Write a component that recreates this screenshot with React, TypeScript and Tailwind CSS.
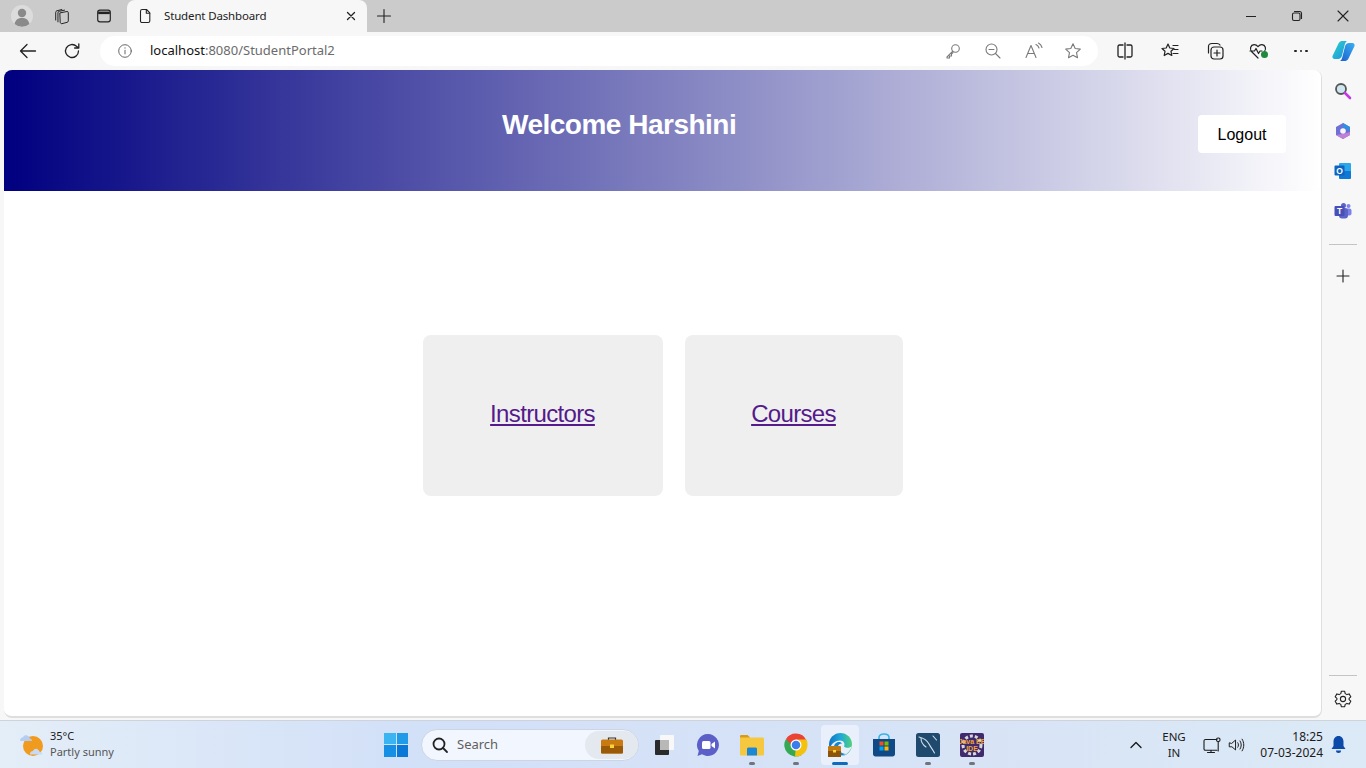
import type { ReactNode } from 'react';

const font = "font-['Liberation_Sans',Arial,sans-serif]";
const uiFont = "font-['Noto_Sans','Open_Sans',sans-serif]";

function Line({ children, size = 20, view = 20, className = '' }: { children: ReactNode; size?: number; view?: number; className?: string }) {
    return (
        <svg width={size} height={size} viewBox={`0 0 ${view} ${view}`} fill="none" stroke="currentColor" strokeWidth={1.1} strokeLinecap="round" strokeLinejoin="round" className={className}>
            {children}
        </svg>
    );
}

function TabStrip() {
    return (
        <div className="flex h-8 items-end bg-[#cbcbcb] text-[#222]">
            <div className="flex h-8 w-[44px] items-center justify-center">
                <svg width="22" height="22" viewBox="0 0 22 22">
                    <circle cx="11" cy="11" r="11" fill="#dcdcdc" />
                    <circle cx="11" cy="8" r="4.2" fill="#8a8a8a" />
                    <path d="M3.6 19c.8-4.4 3.6-6 7.4-6s6.600 1.600 7.400 6a11 11 0 0 1-14.800 0z" fill="#8a8a8a" />
                </svg>
            </div>
            <div className="flex h-8 w-[36px] items-center justify-center">
                <Line size={18}>
                    <path d="M8 6.500l7.500-1.500c.8-.1 1.500.4 1.500 1.200v9.300c0 .8-.5 1.300-1.200 1.500L10 18.500c-1 .2-2-.5-2-1.500z" />
                    <path d="M5.500 16.500V6.500c0-1 .5-1.500 1.300-1.700l6-1.300M3 14.500V6c0-1 .5-1.600 1.300-1.800l5.500-1.400" />
                </Line>
            </div>
            <div className="flex h-8 w-[47px] items-center justify-center">
                <Line size={18}>
                    <rect x="3" y="3.500" width="14" height="13" rx="2.500" strokeWidth={1.300} />
                    <path d="M3.500 6.500h13" strokeWidth={2.800} strokeLinecap="butt" />
                </Line>
            </div>
            <div className={`flex h-8 w-[240px] items-center rounded-t-[8px] bg-[#f7f7f7] pl-[10px] pr-[8px] ${uiFont}`}>
                <Line size={16} view={16}>
                    <path d="M3.500 3.200c0-1 .7-1.700 1.700-1.700h4.300l3.300 3.400v8c0 1-.7 1.600-1.600 1.600H5.200c-1 0-1.700-.6-1.700-1.600z" />
                    <path d="M9.300 1.700v3.500h3.400" />
                </Line>
                <span className="ml-[11px] flex-1 text-[11.500px] tracking-[-0.15px] text-[#222]">Student Dashboard</span>
                <Line size={16} view={16}>
                    <path d="M4.500 4.500l7 7M11.500 4.500l-7 7" strokeWidth={1.300} />
                </Line>
            </div>
            <div className="flex h-8 w-[34px] items-center justify-center">
                <Line size={20}>
                    <path d="M10 3.500v13M3.500 10h13" />
                </Line>
            </div>
            <div className="flex-1" />
            <div className="flex h-8 w-[46px] items-center justify-center">
                <div className="h-px w-[10px] bg-[#222]" />
            </div>
            <div className="flex h-8 w-[46px] items-center justify-center">
                <Line size={12} view={12}>
                    <rect x="1.500" y="3" width="7.500" height="7.500" rx="1.500" />
                    <path d="M3.500 1.500h5c1.200 0 2 .8 2 2v5" />
                </Line>
            </div>
            <div className="flex h-8 w-[46px] items-center justify-center">
                <Line size={14} view={14}>
                    <path d="M2 2l10 10M12 2L2 12" />
                </Line>
            </div>
        </div>
    );
}

function AddressBar() {
    return (
        <div className="ml-[12px] flex h-[30px] flex-1 items-center rounded-full bg-white">
            <div className="flex w-[50px] items-center justify-center text-[#666]">
                <Line size={18}>
                    <circle cx="10" cy="10" r="7" />
                    <path d="M10 9.200v4M10 6.400v.5" />
                </Line>
            </div>
            <span className={`flex-1 text-[13px] text-[#6b6b6b] ${uiFont}`}>
                <span className="text-[#111]">localhost</span>:8080/StudentPortal2
            </span>
            <div className="flex items-center gap-[20px] pr-[15px] text-[#7a7a7a]">
                <Line>
                    <circle cx="12.500" cy="7.500" r="3.800" />
                    <path d="M9.800 10.200L4 16v1h2.500v-2h2v-2l1.500-1.300" />
                </Line>
                <Line>
                    <circle cx="8.500" cy="8.500" r="5.500" />
                    <path d="M6 8.500h5M12.500 12.500L17 17" />
                </Line>
                <Line>
                    <path d="M3 16.500L8 4.500l5 12M4.800 12.500h6.400M13 3.500c1.500.8 2.500 2 3 3.500M15.500 2c2 1.100 3 2.700 3.500 4.500" />
                </Line>
                <Line>
                    <path d="M10 2.800l2.200 4.700 5.100.6-3.800 3.500 1 5.100L10 14.200l-4.500 2.500 1-5.100-3.800-3.500 5.100-.6z" />
                </Line>
            </div>
        </div>
    );
}

function Toolbar() {
    return (
        <div className="flex h-[38px] items-center bg-[#f7f7f7] text-[#222]">
            <div className="flex w-[56px] items-center justify-center">
                <Line size={20}>
                    <path d="M17.500 10H2.500M9 3.500L2.500 10 9 16.500" strokeWidth={1.300} />
                </Line>
            </div>
            <div className="flex w-[32px] items-center justify-center">
                <Line size={20}>
                    <path d="M16.500 10a6.500 6.500 0 1 1-2-4.700L16.500 7M16.800 2.800V7h-4.200" strokeWidth={1.300} />
                </Line>
            </div>
            <AddressBar />
            <div className="ml-[5px] flex items-center">
                <div className="flex w-[44px] items-center justify-center">
                    <Line>
                        <path d="M8 4H4.500C3.500 4 3 4.600 3 5.500v9c0 .9.500 1.500 1.500 1.500H8M12 4h3.500c1 0 1.500.6 1.500 1.500v9c0 .9-.5 1.500-1.500 1.500H12M10 2v16" strokeWidth={1.300} />
                    </Line>
                </div>
                <div className="flex w-[46px] items-center justify-center">
                    <Line>
                        <path d="M8 3l1.800 4 4.200.5-3 2.800.8 4.200L8 12.400l-3.800 2.100.8-4.200-3-2.800L6.200 7zM13 4.500h5M14.500 8.500H18M13 12.500h5" strokeWidth={1.200} />
                    </Line>
                </div>
                <div className="flex w-[44px] items-center justify-center">
                    <Line>
                        <rect x="6" y="6" width="12" height="12" rx="3" strokeWidth={1.200} />
                        <path d="M12 9v6M9 12h6M3.500 12V5.500C3.500 3.500 5 2.500 7 2.500h5c1.500 0 2.500.8 3 1.500" strokeWidth={1.200} />
                    </Line>
                </div>
                <div className="relative flex w-[42px] items-center justify-center">
                    <Line>
                        <path d="M10 17L3.500 10.500C1.500 8 2.500 4 6 3.700c1.800-.1 3 .8 4 2 1-1.200 2.200-2.100 4-2 3.500.3 4.500 4.300 2.500 6.800M2 10h4.500L8 7.500l2.500 5L12 10h2" strokeWidth={1.200} />
                    </Line>
                    <span className="absolute left-[24px] top-[10px] h-[7px] w-[7px] rounded-full bg-[#1e8a3c]" />
                </div>
                <div className="flex w-[44px] items-center justify-center gap-[3px]">
                    <span className="h-[2.500px] w-[2.500px] rounded-full bg-[#222]" />
                    <span className="h-[2.500px] w-[2.500px] rounded-full bg-[#222]" />
                    <span className="h-[2.500px] w-[2.500px] rounded-full bg-[#222]" />
                </div>
                <div className="flex w-[40px] items-center justify-center">
                    <svg width="25" height="24" viewBox="0 0 24 24">
                        <defs>
                            <linearGradient id="cpA" x1="0" y1="0" x2="1" y2="1">
                                <stop offset="0" stopColor="#2bd4c8" />
                                <stop offset="1" stopColor="#1f8fe0" />
                            </linearGradient>
                            <linearGradient id="cpB" x1="0" y1="1" x2="1" y2="0">
                                <stop offset="0" stopColor="#1a5fd0" />
                                <stop offset="1" stopColor="#3bb0f0" />
                            </linearGradient>
                        </defs>
                        <path d="M7 4.500C8 2.500 9.500 2 11 2h4.500c-1.500 1-2 2.500-2.500 4.500l-2.500 10c-.5 2-2 3.500-4 3.500H3c-1.500 0-2.500-1.500-2-3z" fill="url(#cpA)" />
                        <path d="M17 19.500c-1 2-2.500 2.500-4 2.500H8.500c1.500-1 2-2.500 2.500-4.500l2.500-10c.5-2 2-3.500 4-3.500H21c1.500 0 2.500 1.500 2 3z" fill="url(#cpB)" />
                    </svg>
                </div>
                <div className="w-[3px]" />
            </div>
        </div>
    );
}

function Sidebar() {
    return (
        <div className="flex w-[44px] flex-col items-center bg-[#f7f7f7] pr-[2px] text-[#222]">
            <div className="mt-[11px] flex h-[20px] items-center justify-center">
                <svg width="18" height="18" viewBox="0 0 18 18" fill="none">
                    <circle cx="7" cy="7" r="5" fill="#cfe6f2" stroke="#555" strokeWidth={1.800} />
                    <path d="M11 11l5 5" stroke="#c43ae0" strokeWidth={2.600} strokeLinecap="round" />
                </svg>
            </div>
            <div className="mt-[20px] flex h-[20px] items-center justify-center">
                <svg width="18" height="18" viewBox="0 0 18 18">
                    <path d="M9 1l7 4v8l-7 4-7-4V5z" fill="#6f6fd8" />
                    <path d="M9 1l7 4v4l-4-2-3-1.500z" fill="#2f8fe0" />
                    <path d="M2 13l7 4 7-4v-3l-5 1.500z" fill="#c080d8" />
                    <circle cx="9" cy="9" r="2.800" fill="#f7f7f7" />
                </svg>
            </div>
            <div className="mt-[20px] flex h-[20px] items-center justify-center">
                <svg width="18" height="18" viewBox="0 0 18 18">
                    <rect x="5" y="1" width="12" height="15" rx="1" fill="#28a8ea" />
                    <rect x="5" y="9" width="12" height="8" rx="1" fill="#0f78d4" />
                    <rect x="0.500" y="3.500" width="10" height="10" rx="1" fill="#0a64c0" />
                    <text x="5.500" y="11.500" textAnchor="middle" fontSize="8.500" fontWeight="700" fill="#fff" fontFamily="Liberation Sans, sans-serif">O</text>
                </svg>
            </div>
            <div className="mt-[20px] flex h-[20px] items-center justify-center">
                <svg width="18" height="18" viewBox="0 0 18 18">
                    <circle cx="14.500" cy="4" r="2" fill="#7b83eb" />
                    <rect x="11" y="6.500" width="6.500" height="7" rx="2" fill="#7b83eb" />
                    <circle cx="9.500" cy="3.500" r="2.500" fill="#5b63c8" />
                    <rect x="5" y="6" width="9" height="10.500" rx="3" fill="#5b63c8" />
                    <rect x="0.500" y="4" width="10" height="10" rx="1" fill="#4650b8" />
                    <text x="5.500" y="12" textAnchor="middle" fontSize="8.500" fontWeight="700" fill="#fff" fontFamily="Liberation Sans, sans-serif">T</text>
                </svg>
            </div>
            <div className="mt-[23px] h-px w-[28px] bg-[#c4c4c4]" />
            <div className="mt-[21px] flex h-[20px] items-center justify-center">
                <Line size={16} view={16}>
                    <path d="M8 2v12M2 8h12" />
                </Line>
            </div>
            <div className="flex-1" />
            <div className="h-px w-[28px] bg-[#c4c4c4]" />
            <div className="mb-[9px] mt-[13px] flex h-[20px] items-center justify-center">
                <Line size={20}>
                    <circle cx="10" cy="10" r="2.600" />
                    <path d="M8.300 2.300h3.400l.5 2.300 1.700 1 2.200-.7 1.700 2.900-1.700 1.600v1.200l1.700 1.600-1.700 2.900-2.200-.7-1.700 1-.5 2.300H8.300l-.5-2.300-1.700-1-2.200.7-1.700-2.900 1.700-1.600V9.400L2.200 7.800l1.700-2.900 2.200.7 1.700-1z" />
                </Line>
            </div>
        </div>
    );
}

function Page() {
    return (
        <div className={`ml-[4px] flex min-w-0 flex-1 flex-col overflow-hidden rounded-[8px] border-r border-b-2 border-[#dedede] bg-white ${font}`}>
            <header className="flex h-[121px] justify-between bg-[linear-gradient(to_right,#000080,#ffffff)]">
                <h1 className="ml-[498px] mt-[37px] text-[28px] font-bold leading-[36px] tracking-[-0.5px] text-white">Welcome Harshini</h1>
                <button className="mr-[35px] mt-[45px] h-[38px] w-[88px] rounded-[4px] bg-white pt-px text-[16px] text-black">Logout</button>
            </header>
            <main className="flex flex-1 items-start justify-center gap-[22px] pt-[144px]">
                <div className="flex h-[161px] w-[240px] items-center justify-center rounded-[8px] bg-[#efefef] pb-[4px]">
                    <a href="#" className="text-[24px] tracking-[-0.66px] text-[#551a8b] underline">Instructors</a>
                </div>
                <div className="flex h-[161px] w-[218px] items-center justify-center rounded-[8px] bg-[#efefef] pb-[4px]">
                    <a href="#" className="text-[24px] tracking-[-0.66px] text-[#551a8b] underline">Courses</a>
                </div>
            </main>
        </div>
    );
}

function TaskIcon({ children, running, active }: { children: ReactNode; running?: boolean; active?: boolean }) {
    return (
        <div className="relative flex h-[40px] w-[44px] items-center justify-center">
            {active && <div className="absolute inset-y-0 left-[3px] right-[3px] rounded-[4px] bg-[#eaf0fb]" />}
            <div className="relative flex">{children}</div>
            {running && <span className="absolute bottom-[0px] left-[19px] h-[3px] w-[6px] rounded-full bg-[#70757c]" />}
            {active && <span className="absolute bottom-[0px] left-[14px] h-[3px] w-[16px] rounded-full bg-[#0f6cbd]" />}
        </div>
    );
}

function Taskbar() {
    return (
        <div className={`flex h-[48px] items-center border-t border-[#cfd4da] bg-[linear-gradient(to_right,#e4eef8_0%,#d2e0f8_30%,#d6e2f6_60%,#dce9f6_100%)] text-[#1b1b1b] ${uiFont}`}>
            <div className="flex w-[381px] items-center pl-[19px]">
                <svg width="25" height="24" viewBox="0 0 25 24">
                    <circle cx="14" cy="13" r="10" fill="#f09a1e" />
                    <path d="M1 7.500c0-2 1.500-3.300 3-3.300C5 2.500 6.500 2 8 2.500c1.800.5 2.500 1.700 2.800 3 1.500.2 2.200 1.200 2.200 2.500H1.500z" fill="#b4cdf0" />
                    <path d="M11 21c0-2 1.500-3 3-3 .8-1.800 2.500-2.500 4-2 1.500.5 2.300 1.600 2.500 2.800 1.800 0 3 1 3 2.700H11z" fill="#c8dbf5" />
                </svg>
                <div className="ml-[6px] -mt-[2px] flex flex-col text-[11px] leading-[15.500px]">
                    <span>35°C</span>
                    <span className="text-[#555]">Partly sunny</span>
                </div>
            </div>
            <div className="flex w-[30px] justify-center">
                <div className="grid h-[24px] w-[24px] grid-cols-2 gap-[1px]">
                    <span className="bg-[#3bb4f2]" />
                    <span className="bg-[#1f9be8]" />
                    <span className="bg-[#1690e4]" />
                    <span className="bg-[#0a78d6]" />
                </div>
            </div>
            <div className="ml-[10px] flex h-[32px] w-[218px] items-center rounded-full border border-[#cbd5e6] bg-[#f2f6fe] pl-[9px] pr-[0px]">
                <svg width="18" height="18" viewBox="0 0 18 18" fill="none" stroke="#222" strokeWidth={1.800} strokeLinecap="round">
                    <circle cx="8" cy="8" r="5.500" />
                    <path d="M12 12l4 4" />
                </svg>
                <span className="ml-[8px] flex-1 text-[13px] text-[#5f5f5f]">Search</span>
                <div className="flex h-[28px] w-[53px] items-center justify-center rounded-full bg-[#e4e8ef]">
                    <svg width="22" height="18" viewBox="0 0 22 18">
                        <path d="M7.500 4V2h7v2" fill="none" stroke="#333" strokeWidth={1.200} />
                        <rect x="0" y="3.500" width="22" height="14" rx="1.500" fill="#c97a10" />
                        <rect x="0" y="10" width="22" height="7.500" rx="1" fill="#9a5a08" />
                        <rect x="9" y="8.500" width="4" height="3.500" fill="#f7d33c" />
                    </svg>
                </div>
            </div>
            <div className="ml-[3px] flex items-center">
                <TaskIcon>
                    <svg width="22" height="22" viewBox="0 0 22 22">
                        <rect x="7" y="1" width="14" height="15" rx="1" fill="#f8f8f8" />
                        <rect x="2" y="6" width="14" height="15" rx="1" fill="#2b2b2b" />
                        <rect x="7" y="6" width="9" height="10" fill="#b8b8b8" />
                    </svg>
                </TaskIcon>
                <TaskIcon>
                    <svg width="24" height="24" viewBox="0 0 24 24">
                        <path d="M12 1a11 11 0 1 1-6 20.300L1.500 23l1.300-5A11 11 0 0 1 12 1z" fill="#5b5fc7" />
                        <rect x="6" y="8" width="8.500" height="8" rx="1.500" fill="#fff" />
                        <path d="M15.500 11l3.500-2.500v7L15.500 13z" fill="#fff" />
                    </svg>
                </TaskIcon>
                <TaskIcon running>
                    <svg width="24" height="22" viewBox="0 0 24 22">
                        <path d="M0 2.500C0 1.500.7 1 1.500 1h6L10 3.500h12.500c1 0 1.500.5 1.500 1.500V20c0 1-.5 1.500-1.500 1.500h-21C.5 21.500 0 21 0 20z" fill="#f6c83f" />
                        <path d="M0 2.500C0 1.500.7 1 1.500 1h6L10 3.500H0z" fill="#d99a1b" />
                        <path d="M7 21.500V15c0-1 .7-1.500 1.500-1.500h7c.8 0 1.500.5 1.500 1.500v6.500z" fill="#1b87d8" />
                    </svg>
                </TaskIcon>
                <TaskIcon running>
                    <svg width="24" height="24" viewBox="0 0 24 24">
                        <path d="M12 12l5.700 9.900A11.500 11.500 0 0 1 2 6z" fill="#34a853" />
                        <path d="M12 12h11.500A11.500 11.500 0 0 1 11 23.500z" fill="#f4c20d" />
                        <path d="M12 .5A11.500 11.500 0 0 1 22.500 7.500H12A5.500 5.500 0 0 0 6.500 11L2 6A11.500 11.500 0 0 1 12 .5z" fill="#ea4335" />
                        <path d="M12 6.500h10.500a11.500 11.500 0 0 1 1 5.500H12z" fill="#f4c20d" />
                        <circle cx="12" cy="12" r="5.500" fill="#fff" />
                        <circle cx="12" cy="12" r="4.300" fill="#3b7ded" />
                    </svg>
                </TaskIcon>
                <TaskIcon active>
                    <svg width="26" height="26" viewBox="0 0 26 26">
                        <defs>
                            <linearGradient id="edgeA" x1="0" y1="0" x2="1" y2="0">
                                <stop offset="0" stopColor="#1272c4" />
                                <stop offset="0.5" stopColor="#1fa8d8" />
                                <stop offset="1" stopColor="#52d27a" />
                            </linearGradient>
                        </defs>
                        <circle cx="13.500" cy="12.500" r="11.500" fill="url(#edgeA)" />
                        <path d="M25 14c-2 2.200-6 2.500-8 .5 1.500-3-.5-6-4-6-4.500 0-9 3-10 8 2 5.500 6 7.500 10 7.500 5.500 0 10-4 12-10z" fill="#eaf0fb" />
                        <path d="M7 15c0-2.500 2-5 5-5 1.500 0 2.500.7 3 1.500-2.500 0-4 1.500-4 3.500 0 3.500 3 6.500 8 7-2 1-4 1.500-6 1-3.500-.5-6-4-6-8z" fill="#1585cf" />
                        <rect x="1" y="14" width="13" height="11" rx="1" fill="#c07a12" />
                        <rect x="1" y="19" width="13" height="6" fill="#8c5408" />
                        <rect x="6" y="18" width="3" height="2.500" fill="#f7d33c" />
                    </svg>
                </TaskIcon>
                <TaskIcon>
                    <svg width="24" height="24" viewBox="0 0 24 24">
                        <path d="M7 6V4.500C7 2.500 9 1 12 1s5 1.500 5 3.500V6" fill="none" stroke="#35b4e8" strokeWidth={1.600} />
                        <path d="M1 6h22v15c0 1.600-1 2.500-2.500 2.500h-17C2 23.500 1 22.600 1 21z" fill="#0f4a86" />
                        <rect x="7.500" y="8.500" width="4" height="4" fill="#f25022" />
                        <rect x="12.500" y="8.500" width="4" height="4" fill="#7fba00" />
                        <rect x="7.500" y="13.500" width="4" height="4" fill="#00a4ef" />
                        <rect x="12.500" y="13.500" width="4" height="4" fill="#ffb900" />
                    </svg>
                </TaskIcon>
                <TaskIcon running>
                    <svg width="24" height="24" viewBox="0 0 24 24">
                        <rect width="24" height="24" rx="2.500" fill="#1f4a6e" />
                        <path d="M3 4c4 1 8 3 10 7 1.500 3 3.500 5 5.500 9M5 5c0 4 2 7 5 9M17 3l3.500 4" fill="none" stroke="#cfe0ea" strokeWidth={1.100} strokeLinecap="round" />
                    </svg>
                </TaskIcon>
                <TaskIcon running>
                    <svg width="24" height="24" viewBox="0 0 24 24">
                        <rect width="24" height="24" rx="2" fill="#3f2a6e" />
                        <circle cx="12" cy="12" r="9" fill="none" stroke="#d8d8d8" strokeWidth={3} strokeDasharray="3 2" />
                        <text x="12" y="11" textAnchor="middle" fontSize="7" fontWeight="700" fill="#f2a33a" fontFamily="Liberation Sans, sans-serif">Java EE</text>
                        <text x="12" y="18" textAnchor="middle" fontSize="7" fontWeight="700" fill="#f2a33a" fontFamily="Liberation Sans, sans-serif">IDE</text>
                    </svg>
                </TaskIcon>
            </div>
            <div className="flex-1" />
            <div className="flex items-center">
                <div className="flex w-[26px] justify-center">
                    <Line size={14} view={14}>
                        <path d="M2 9.500L7 4.500l5 5" strokeWidth={1.400} />
                    </Line>
                </div>
                <div className="ml-[12px] flex w-[26px] flex-col items-center text-[11.500px] leading-[16px]">
                    <span>ENG</span>
                    <span>IN</span>
                </div>
                <div className="ml-[15px]">
                    <Line size={20}>
                        <path d="M15 4.500H3.500c-.8 0-1.500.5-1.500 1.500v8c0 .8.700 1.300 1.500 1.300H15M9 15.300v2M5.500 17.500h7" />
                        <rect x="14.500" y="3" width="3.500" height="3.500" rx="1.500" />
                        <path d="M16.200 6.500V16" />
                    </Line>
                </div>
                <div className="ml-[5px]">
                    <Line size={18}>
                        <path d="M2.500 8v4h3l4 3.500v-11l-4 3.500zM12 7.500c1 1.500 1 3.500 0 5M14.500 5.500c1.800 2.800 1.800 6.200 0 9M16.800 3.500c2.500 4 2.500 9 0 13" />
                    </Line>
                </div>
                <div className="ml-[2px] flex w-[76px] flex-col items-end text-[12px] leading-[16px]">
                    <span>18:25</span>
                    <span>07-03-2024</span>
                </div>
                <div className="ml-[7px] mr-[20px] flex w-[16px] justify-center">
                    <svg width="15" height="17" viewBox="0 0 15 17" fill="#0b4aa8">
                        <path d="M7.500 0C4.300 0 2.500 2.500 2.500 5.500V10L.5 13h14l-2-3V5.500C12.500 2.500 10.700 0 7.500 0z" />
                        <path d="M5 14.500a2.500 2.500 0 0 0 5 0z" />
                    </svg>
                </div>
            </div>
        </div>
    );
}

export default function App() {
    return (
        <div className="flex h-[768px] w-[1366px] flex-col overflow-hidden bg-[#f7f7f7]">
            <TabStrip />
            <Toolbar />
            <div className="flex flex-1 min-h-0">
                <Page />
                <Sidebar />
            </div>
            <div className="h-[2px]" />
            <Taskbar />
        </div>
    );
}
